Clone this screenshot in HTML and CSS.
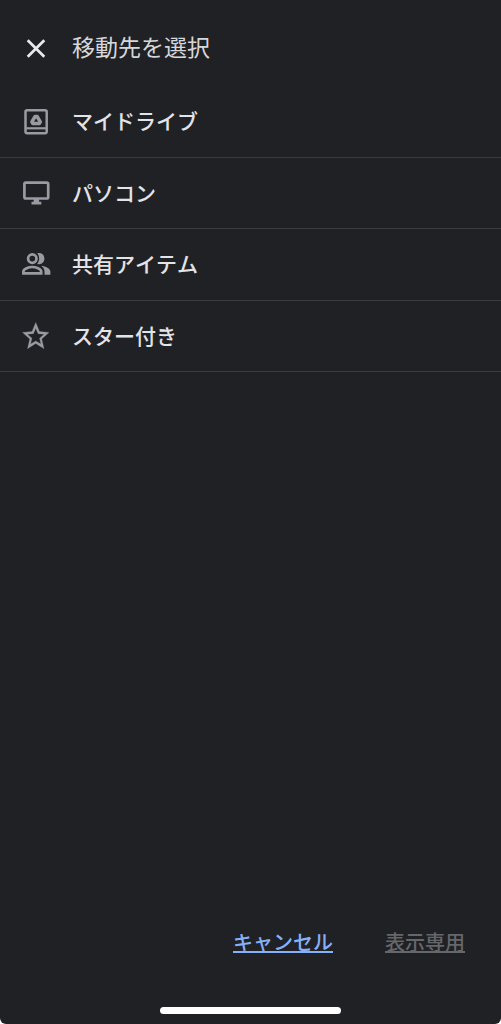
FILE: index.html
```
<!DOCTYPE html>
<html lang="ja">
<head>
<meta charset="utf-8">
<meta name="viewport" content="width=device-width, initial-scale=1">
<title>移動先を選択</title>
<link rel="stylesheet" href="styles.css">
</head>
<body>
<div class="screen">
  <header class="header">
    <button class="close" type="button" aria-label="閉じる">
      <svg class="icon" viewBox="0 0 30 30" fill="none" stroke="currentColor" stroke-width="2.7"><path d="M6.700 7.200 23.300 23.800M23.300 7.200 6.700 23.800"/></svg>
    </button>
    <h1 class="title">移動先を選択</h1>
  </header>
  <nav class="list">
    <a class="row" href="#my-drive">
      <svg class="icon" viewBox="0 0 30 30" fill="none" stroke="currentColor" stroke-width="2.500"><rect x="4.500" y="4.200" width="21.200" height="23" rx="1.600"/><path d="M4.500 22.300h21.200" stroke-width="2.200"/><path d="M14.100 10.500h2l3.200 5.400-.9 1.600h-6.600l-.9-1.600z" stroke-width="3.500" stroke-linejoin="round"/></svg>
      <span class="label">マイドライブ</span>
    </a>
    <a class="row" href="#computers">
      <svg class="icon" viewBox="0 0 30 30" fill="none" stroke="currentColor" stroke-width="2.700"><rect x="3.400" y="4.700" width="23.800" height="15.800" rx="1.500"/><path d="M12.700 20.500h5.400v3.200h2.200v2.900H10.500v-2.900h2.200z" fill="currentColor" stroke="none"/></svg>
      <span class="label">パソコン</span>
    </a>
    <a class="row" href="#shared">
      <svg class="icon" viewBox="0 0 30 30" fill="none" stroke="currentColor" stroke-width="2.700"><circle cx="11.300" cy="9.600" r="4.200"/><path d="M2.400 24.300v-1.800c0-2.900 5.600-4.500 8.900-4.500s8.900 1.600 8.900 4.500v1.800z"/><path d="M16.200 4.300c4.200-1.200 7.200 1.600 7.200 5.300s-3 6.500-7.200 5.300c2.600-3 2.600-7.600 0-10.600zM20.200 16.800c4.400.700 9.200 2.700 9.200 6v2.900h-5.900v-3.100c0-2.400-1.400-4.200-3.300-5.800z" fill="currentColor" stroke="none"/></svg>
      <span class="label">共有アイテム</span>
    </a>
    <a class="row" href="#starred">
      <svg class="icon" viewBox="0 0 24 24" fill="currentColor" stroke="currentColor" stroke-width=".2"><path d="m21.600 9.240-6.900-.620L12 2 9.300 8.630 2.400 9.240l5.260 4.730L6.020 21 12 17.270 17.980 21l-1.630-7.030zM12 15.400l-3.760 2.270 1-4.280-3.320-2.880 4.380-.380L12 6.100l1.710 4.040 4.380.380-3.320 2.880 1 4.280z" transform="translate(-1.400 -1) scale(1.100)"/></svg>
      <span class="label">スター付き</span>
    </a>
  </nav>
  <footer class="footer">
    <div class="actions">
      <button class="action" type="button">キャンセル</button>
      <button class="action" type="button" disabled>表示専用</button>
    </div>
    <div class="home-bar"></div>
  </footer>
</div>
</body>
</html>
```
FILE: styles.css
```
* {
  box-sizing: border-box;
}

body {
  margin: 0;
  background: #fff;
  font-family: "Noto Sans CJK JP", sans-serif;
}

.screen {
  display: flex;
  flex-direction: column;
  min-height: 100vh;
  background: #202125;
  color: #e3e4e8;
  border-radius: 0 0 6px 6px;
}

.header {
  display: flex;
  align-items: center;
  gap: 21px;
  height: 86px;
  padding: 10px 21px 0;
}

.icon {
  display: block;
  flex: none;
  width: 30px;
  height: 30px;
}

.close {
  padding: 0;
  border: 0;
  background: none;
  color: #e8e9ec;
}

.title {
  margin: 0;
  padding-bottom: 4px;
  color: #d6d7da;
  font-size: 23px;
  font-weight: 400;
  line-height: 32px;
}

.list {
  display: grid;
  grid-template-rows: repeat(4, 1fr);
  height: 286px;
}

.row {
  display: flex;
  align-items: center;
  gap: 21px;
  padding: 0 21px;
  border-bottom: 1px solid #3a3b3f;
  color: #989ba1;
  text-decoration: none;
}

.label {
  padding-bottom: 2px;
  color: #e3e4e8;
  font-size: 21px;
  font-weight: 500;
  font-kerning: none;
  line-height: 30px;
}

.footer {
  display: flex;
  flex-direction: column;
  align-items: center;
  gap: 50px;
  margin-top: auto;
  padding-bottom: 10px;
}

.actions {
  display: flex;
  justify-content: flex-end;
  align-self: stretch;
  gap: 52px;
  padding: 0 36px;
}

.action {
  padding: 0;
  border: 0;
  background: none;
  color: #86b1f8;
  font: 500 20px/30px "Noto Sans CJK JP", sans-serif;
  text-decoration: underline;
  text-decoration-thickness: 2px;
}

.action:disabled {
  color: #66676b;
}

.home-bar {
  width: 36%;
  height: 7px;
  border-radius: 4px;
  background: #fff;
}
```
